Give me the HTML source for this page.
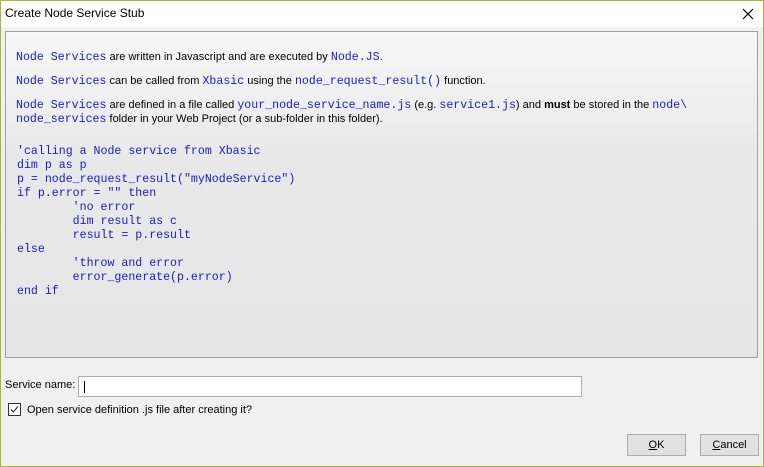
<!DOCTYPE html>
<html><head><style>
*{margin:0;padding:0;box-sizing:border-box}
body{width:764px;height:467px;overflow:hidden;background:#f0f0f0;font-family:"Liberation Sans",Tahoma,sans-serif;font-size:11px;color:#000;position:relative}
.frame{position:absolute;left:0;top:0;width:764px;height:467px;border:1px solid #a9b43a;border-top:1px solid #a9b43a}
.title{position:absolute;left:1px;top:1px;width:762px;height:26px;background:#fff}
.title span{position:absolute;left:4px;top:5px;font-size:12px}
.x{position:absolute;left:740px;top:6px}
.panel{position:absolute;left:5px;top:31px;width:753px;height:327px;border:1px solid #a0a0a0;background:linear-gradient(#f7f7f7,#e8e8e8 40%,#e6e6e6)}
.m{font-family:"Liberation Mono","Courier New",monospace;font-size:11.6px;color:#1a1acc}
.p{position:absolute;left:10px;white-space:nowrap}
pre{position:absolute;left:11px;top:113px;line-height:14px;font-family:"Liberation Mono","Courier New",monospace;font-size:11.6px;color:#1a1acc}
.lbl{position:absolute;left:5px;top:379px}
.inp{position:absolute;left:78px;top:376px;width:504px;height:21px;background:#fff;border:1px solid #acacac}
.inp i{position:absolute;left:5px;top:4px;width:1px;height:12px;background:#000}
.cb{position:absolute;left:8px;top:403px;width:13px;height:13px;border:1px solid #333;background:#fff}
.cbl{position:absolute;left:27px;top:404px}
.btn{position:absolute;top:434px;width:59px;height:22px;background:#e1e1e1;border:1px solid #adadad;text-align:center;line-height:20px}
</style></head><body>
<div class="frame"></div>
<div class="title"><span>Create Node Service Stub</span>
<svg class="x" width="14" height="14" viewBox="0 0 14 14"><path d="M2 2L12 12M12 2L2 12" stroke="#000" stroke-width="1.2"/></svg></div>
<div class="panel">
<div class="p" style="top:19px"><span class="m">Node Services</span> are written in Javascript and are executed by <span class="m">Node.JS</span>.</div>
<div class="p" style="top:43px"><span class="m">Node Services</span> can be called from <span class="m">Xbasic</span> using the <span class="m">node_request_result()</span> function.</div>
<div class="p" style="top:67px"><span class="m">Node Services</span> are defined in a file called <span class="m">your_node_service_name.js</span> (e.g. <span class="m">service1.js</span>) and <b>must</b> be stored in the <span class="m">node\</span></div>
<div class="p" style="top:81px"><span class="m">node_services</span> folder in your Web Project (or a sub-folder in this folder).</div>
<pre>'calling a Node service from Xbasic
dim p as p
p = node_request_result("myNodeService")
if p.error = "" then
        'no error
        dim result as c
        result = p.result
else
        'throw and error
        error_generate(p.error)
end if</pre>
</div>
<div class="lbl">Service name:</div>
<div class="inp"><i></i></div>
<div class="cb"><svg width="11" height="11" viewBox="0 0 11 11" style="position:absolute;left:0;top:0"><path d="M2 5.5L4.3 8L9 2.5" stroke="#222" fill="none" stroke-width="1"/></svg></div>
<div class="cbl">Open service definition .js file after creating it?</div>
<div class="btn" style="left:627px"><u>O</u>K</div>
<div class="btn" style="left:700px"><u>C</u>ancel</div>
</body></html>
